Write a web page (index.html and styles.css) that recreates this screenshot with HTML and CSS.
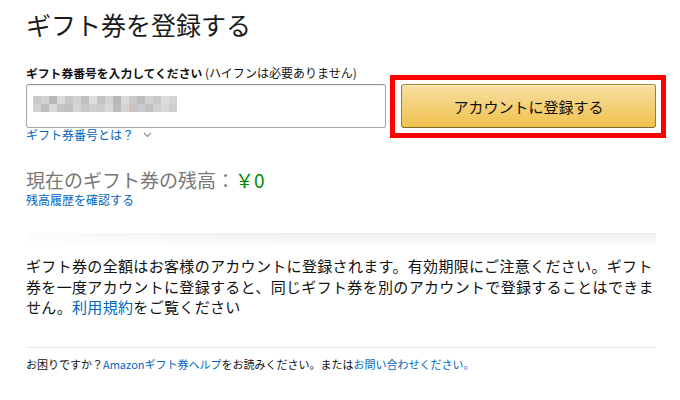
FILE: index.html
```html
<!DOCTYPE html>
<html>
<head>
  <meta charset="UTF-8">
  <title>ギフト券を登録する</title>
  <link rel="stylesheet" href="styles.css">
</head>
<body>
  <div class="container">
    <h1>ギフト券を登録する</h1>

    <div class="redeem">
      <label class="redeem-label" for="claimCode"><strong>ギフト券番号を入力してください</strong> (ハイフンは必要ありません)</label>
      <div class="code-input" id="claimCode">
        <div class="mosaic"></div>
      </div>
      <div class="btn-wrap">
        <button class="btn">アカウントに登録する</button>
      </div>
      <a class="help-link" href="#">ギフト券番号とは？
        <svg class="chevron" width="9" height="6" viewBox="0 0 9 6"><path d="M1 1l3.5 3.5L8 1" fill="none" stroke="#8a8a8a" stroke-width="1.1"/></svg>
      </a>
    </div>

    <div class="balance">
      <div class="balance-title">現在のギフト券の残高：<span class="amount">￥0</span></div>
      <a class="small-link" href="#">残高履歴を確認する</a>
    </div>

    <div class="divider-section"></div>

    <p class="notice">ギフト券の全額はお客様のアカウントに登録されます。有効期限にご注意ください。ギフト券を一度アカウントに登録すると、同じギフト券を別のアカウントで登録することはできません。<a href="#">利用規約</a>をご覧ください</p>

    <div class="footer">
      お困りですか？<a href="#">Amazonギフト券ヘルプ</a>をお読みください。または<a href="#">お問い合わせください。</a>
    </div>
  </div>
</body>
</html>
```

FILE: styles.css
```css
body {
  margin: 0;
  background: #fff;
  color: #111;
  font-family: "Noto Sans CJK JP", "Noto Sans", sans-serif;
}
a {
  color: #0066c0;
  text-decoration: none;
}
.container {
  width: 630px;
  padding: 8px 0 0 26px;
}
h1 {
  margin: 0;
  font-size: 25px;
  line-height: 32px;
  font-weight: 400;
  color: #1a1a1a;
}
.redeem {
  display: grid;
  grid-template-columns: 360px 255px;
  column-gap: 15px;
  margin-top: 25px;
}
.redeem-label {
  grid-column: 1 / 3;
  font-size: 12px;
  line-height: 16px;
  margin-bottom: 3px;
}
.redeem-label strong {
  font-weight: 700;
  font-size: 11.8px;
}
.code-input {
  grid-column: 1;
  height: 44px;
  box-sizing: border-box;
  padding: 11px 0 0 6px;
  border: 1px solid #a6a6a6;
  border-top-color: #949494;
  border-radius: 3px;
  box-shadow: inset 0 1px 0 rgba(0, 0, 0, 0.07);
}
.mosaic {
  width: 144px;
  height: 16px;
  background:
    linear-gradient(to right, #c9c9c9 0 8px, #d2d2d2 8px 16px, #b9b9b9 16px 24px, #d9dbdb 24px 32px, #c8c8c8 32px 40px, #d1d1d1 40px 48px, #bfbfbf 48px 56px, #dfdfdf 56px 64px, #c4c4c4 64px 72px, #d3d3d3 72px 80px, #b5b9b5 80px 88px, #d9d9d9 88px 96px, #c9c9c9 96px 104px, #bcbcbc 104px 112px, #d1d1d1 112px 120px, #c8c8c8 120px 128px, #dddddd 128px 136px, #d5d5d5 136px 144px) 0 0 / 144px 8px no-repeat,
    linear-gradient(to right, #d1d1d1 0 8px, #bdbdbd 8px 16px, #d9d9d9 16px 24px, #c4c4c4 24px 32px, #c0c0c0 32px 40px, #d5d5d5 40px 48px, #c8c8c8 48px 56px, #d0d0d0 56px 64px, #cccccc 64px 72px, #d9d9d9 72px 80px, #bdbdbd 80px 88px, #d4d4d4 88px 96px, #ccc4c0 96px 104px, #c8ccd1 104px 112px, #c1c1c1 112px 120px, #d0d0d0 120px 128px, #d9d9d9 128px 136px, #cdcdcd 136px 144px) 0 8px / 144px 8px no-repeat;
}
/* red highlight box around the button */
.btn-wrap {
  grid-column: 2;
  display: flex;
  margin: -9px -10px -10px -11px;
  padding: 4px 5px 5px 6px;
  border: 5px solid #f00;
}
.btn {
  flex: 1;
  height: 44px;
  border: 1px solid;
  border-color: #a88734 #9c7e31 #846a29;
  border-radius: 3px;
  background: linear-gradient(to bottom, #f7dfa5, #f0c14b);
  box-shadow: inset 0 1px 0 rgba(255, 255, 255, 0.4);
  font-family: inherit;
  font-size: 15px;
  color: #111;
  cursor: pointer;
}
.help-link {
  grid-column: 1;
  font-size: 12px;
  line-height: 14px;
}
.chevron {
  margin-left: 6px;
  vertical-align: 2px;
}
.balance {
  margin-top: 27px;
}
.balance-title {
  font-size: 19px;
  line-height: 22px;
  color: #777;
}
.amount {
  color: #008a00;
}
.small-link {
  display: block;
  margin-top: 1px;
  font-size: 12px;
  line-height: 16px;
}
.divider-section {
  height: 14px;
  margin-top: 25px;
  background: linear-gradient(to bottom, #ededed, rgba(255, 255, 255, 0));
  -webkit-mask-image: linear-gradient(to right, rgba(0, 0, 0, 0.2), #000 40%, #000);
  mask-image: linear-gradient(to right, rgba(0, 0, 0, 0.2), #000 40%, #000);
}
.notice {
  margin: 9px 0 0;
  font-size: 15px;
  line-height: 20.5px;
  letter-spacing: 0.33px;
}
.footer {
  margin-top: 29px;
  padding-top: 8px;
  border-top: 1px solid #e7e7e7;
  font-size: 11px;
  line-height: 16px;
}
```
